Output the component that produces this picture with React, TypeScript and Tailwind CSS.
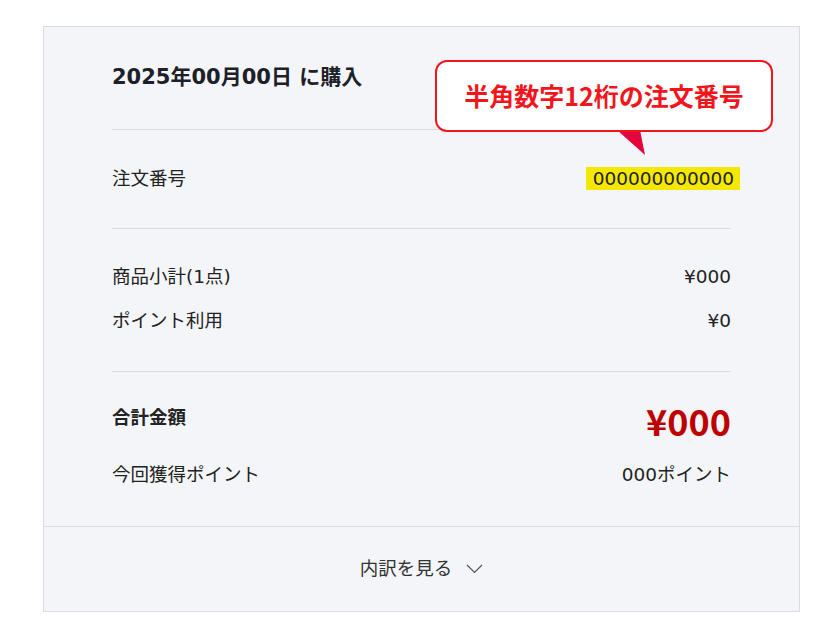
import React from 'react';

const FONT = '[font-family:"DejaVu_Sans","Noto_Sans_CJK_JP",sans-serif]';
const CJK = '[font-family:"Noto_Sans_CJK_JP",sans-serif]';

function Row({ label, value }: { label: string; value: React.ReactNode }) {
  return (
    <div className="flex items-center justify-between h-[28px] text-[18.5px] text-[#222]">
      <span>{label}</span>
      <span>{value}</span>
    </div>
  );
}

function Callout() {
  return (
    <div className="absolute left-[391px] top-[33px] w-[338px]">
      <div className="relative z-10 h-[72px] rounded-[12px] border-2 border-[#f2151b] bg-white flex items-center justify-center">
        <span className={`text-[25px] font-bold text-[#f2151b] ${CJK}`}>半角数字12桁の注文番号</span>
      </div>
      <svg className="absolute left-[181px] top-[70px]" width="32" height="26" viewBox="0 0 32 26" aria-hidden>
        <polygon points="1,0 24,0 29,25" fill="#e2063c" />
      </svg>
    </div>
  );
}

export default function App() {
  return (
    <div className={`min-h-screen bg-white pt-[26px] pl-[43px] ${FONT}`}>
      <div className="relative w-[757px] border border-[#dcdcdc] bg-[#f4f5f8]">
        <div className="px-[68px]">
          <div className="pt-[36px] h-[103px] border-b border-[#dcdcdc]">
            <h2 className="text-[21px] leading-[28px] font-bold text-[#1c2129]">2025年00月00日 に購入</h2>
          </div>

          <div className="py-[35px] border-b border-[#dcdcdc]">
            <Row
              label="注文番号"
              value={<span className="bg-[#f5e800] pl-[7px] pr-[6px] -mr-[9px] py-[1px]">000000000000</span>}
            />
          </div>

          <div className="pt-[34px] pb-[36px] border-b border-[#dcdcdc] flex flex-col gap-[16px]">
            <Row label="商品小計(1点)" value="¥000" />
            <Row label="ポイント利用" value="¥0" />
          </div>

          <div className="pt-[30px] pb-[37px]">
            <div className="flex items-start justify-between">
              <span className="mt-[2px] text-[18.5px] leading-[28px] font-bold text-[#222]">合計金額</span>
              <span className={`text-[36px] leading-[36px] font-bold text-[#bf0000] ${CJK}`}>¥000</span>
            </div>
            <div className="mt-[23px]">
              <Row label="今回獲得ポイント" value="000ポイント" />
            </div>
          </div>
        </div>

        <div className="h-[85px] border-t border-[#dcdcdc] flex items-center justify-center gap-[14px] text-[18.5px] text-[#333]">
          <span>内訳を見る</span>
          <svg width="17" height="10" viewBox="0 0 17 10" fill="none" aria-hidden>
            <path d="M1 1 L8.5 8.5 L16 1" stroke="#555" strokeWidth="1.2" />
          </svg>
        </div>

        <Callout />
      </div>
    </div>
  );
}
